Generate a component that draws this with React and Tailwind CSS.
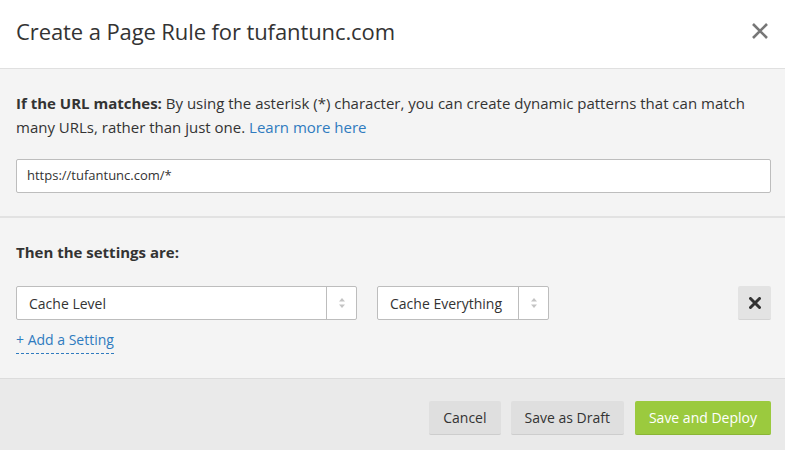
export default function App() {
  const font = { fontFamily: '"Open Sans", "Liberation Sans", sans-serif' };

  const Arrows = () => (
    <svg width="8" height="12" viewBox="0 0 8 12">
      <path d="M4 1 L7 4.5 L1 4.5 Z" fill="#c4c4c4" />
      <path d="M4 11 L7 7.5 L1 7.5 Z" fill="#c4c4c4" />
    </svg>
  );

  return (
    <div className="w-[785px] h-[450px] bg-white text-[#333] flex flex-col overflow-hidden" style={font}>
      {/* Header */}
      <div className="h-[69px] shrink-0 flex items-center justify-between pl-4 pr-4 pb-[6px] border-b border-[#e0e0e0]">
        <h1 className="text-[22px] text-[#333] tracking-[-0.1px]">Create a Page Rule for tufantunc.com</h1>
        <button className="text-[#777]">
          <svg width="18" height="18" viewBox="0 0 18 18">
            <path d="M2 2 L16 16 M16 2 L2 16" stroke="#777" strokeWidth="2.6" />
          </svg>
        </button>
      </div>

      {/* URL section */}
      <div className="bg-[#f4f4f4] pl-4 pr-[14px] pt-[22px] pb-[23px] border-b-2 border-[#e2e2e2]">
        <p className="text-[15px] leading-[24px] text-[#333]">
          <span className="font-bold">If the URL matches:</span> By using the asterisk (*) character, you can create dynamic patterns that can match many URLs, rather than just one.{" "}
          <a className="text-[#2f7bbf]">Learn more here</a>
        </p>
        <div className="mt-[20px] h-[34px] bg-white border border-[#bdbdbd] rounded-[2px] flex items-center px-[10px] text-[13px] text-[#333]">
          https://tufantunc.com/*
        </div>
      </div>

      {/* Settings section */}
      <div className="bg-[#f4f4f4] pl-4 pr-[14px] pt-[22px] h-[161px] shrink-0 border-b border-[#dcdcdc]">
        <p className="text-[15px] leading-[24px] font-bold text-[#333]">Then the settings are:</p>
        <div className="mt-[22px] flex items-center">
          <div className="w-[341px] h-[34px] bg-white border border-[#bdbdbd] rounded-[2px] flex">
            <div className="flex-1 flex items-center pl-3 text-[14px] text-[#333]">Cache Level</div>
            <div className="w-[30px] border-l border-[#bdbdbd] flex items-center justify-center">
              <Arrows />
            </div>
          </div>
          <div className="ml-[20px] w-[172px] h-[34px] bg-white border border-[#bdbdbd] rounded-[2px] flex">
            <div className="flex-1 flex items-center pl-3 text-[14px] text-[#333]">Cache Everything</div>
            <div className="w-[30px] border-l border-[#bdbdbd] flex items-center justify-center">
              <Arrows />
            </div>
          </div>
          <div className="flex-1" />
          <button className="w-[33px] h-[34px] bg-[#e3e3e3] rounded-[2px] border-b border-[#d4d4d4] flex items-center justify-center">
            <svg width="12" height="12" viewBox="0 0 12 12">
              <path d="M1.5 1.5 L10.5 10.5 M10.5 1.5 L1.5 10.5" stroke="#333" strokeWidth="3" strokeLinecap="round" />
            </svg>
          </button>
        </div>
        <div className="mt-[7px]">
          <a className="inline-block text-[14px] leading-[26px] text-[#2f7bbf] border-b border-dashed border-[#2f7bbf]">
            + Add a Setting
          </a>
        </div>
      </div>

      {/* Footer */}
      <div className="flex-1 bg-[#eaeaea] flex items-start justify-end gap-[10px] pr-[14px] pt-[22px]">
        <button className="h-[34px] px-[14px] bg-[#dfdfdf] rounded-[2px] border-b border-[#cdcdcd] text-[14px] text-[#333]">Cancel</button>
        <button className="h-[34px] px-[14px] bg-[#dfdfdf] rounded-[2px] border-b border-[#cdcdcd] text-[14px] text-[#333]">Save as Draft</button>
        <button className="ml-[1px] h-[34px] px-[14px] bg-[#9bca3e] rounded-[2px] border-b border-[#8ab535] text-[14px] text-white">Save and Deploy</button>
      </div>
    </div>
  );
}
